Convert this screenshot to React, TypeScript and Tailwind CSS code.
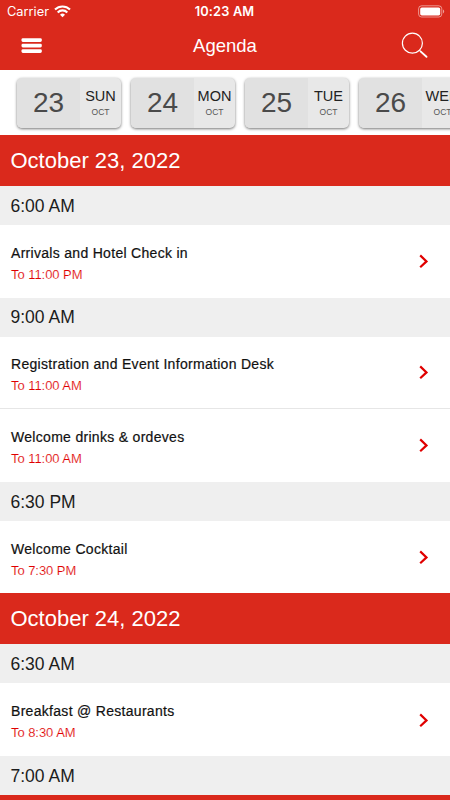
import React from 'react';

const days = [
  { num: '23', day: 'SUN' },
  { num: '24', day: 'MON' },
  { num: '25', day: 'TUE' },
  { num: '26', day: 'WED' },
];

function StatusBar() {
  return (
    <div className="flex h-[22px] items-center justify-between pl-[7px] pr-[5px] font-['Inter',sans-serif] text-[13px]">
      <div className="flex w-[120px] items-center gap-[5px]">
        <span className="w-[42px] whitespace-nowrap pt-px text-[12.8px]">Carrier</span>
        <svg width="17" height="13" viewBox="0 0 17 13" fill="none" stroke="white" strokeWidth="2.1">
          <path d="M1 4.6A10.7 10.7 0 0 1 16 4.6" />
          <path d="M3.7 7.4A6.8 6.8 0 0 1 13.3 7.4" />
          <path d="M8.5 12.3L6 9.8a3.6 3.6 0 0 1 5 0Z" fill="white" stroke="none" />
        </svg>
      </div>
      <span className="-ml-[3px] pt-px text-[12.8px] font-semibold tracking-[0.15px]">10:23 AM</span>
      <div className="flex w-[120px] justify-end">
        <svg width="27" height="13" viewBox="0 0 27 13">
          <rect x="0.6" y="0.8" width="23.2" height="11.2" rx="3" fill="none" stroke="white" strokeOpacity="0.5" />
          <rect x="2.2" y="2.4" width="20" height="8" rx="1.6" fill="white" />
          <path d="M25 4.6c1.6.6 1.6 3.2 0 3.8Z" fill="white" fillOpacity="0.55" />
        </svg>
      </div>
    </div>
  );
}

function NavBar() {
  return (
    <div className="flex h-[48px] items-center justify-between pl-[21px] pr-[21px]">
      <svg width="28" height="28" viewBox="0 0 28 28" fill="white">
        <rect x="0.5" y="6.2" width="20.3" height="3.7" rx="1.4" />
        <rect x="0.5" y="11.7" width="20.3" height="3.7" rx="1.4" />
        <rect x="0.5" y="17.2" width="20.3" height="3.7" rx="1.4" />
      </svg>
      <h1 className="text-[18.5px] leading-6">Agenda</h1>
      <svg width="28" height="28" viewBox="0 0 28 28" fill="none" stroke="white">
        <circle cx="11.4" cy="11.2" r="10" strokeWidth="1.2" />
        <path d="M18.5 18.3l1.6 1.6" strokeWidth="1.2" />
        <path d="M19.8 19.6l5.7 5.2" strokeWidth="1.9" strokeLinecap="round" />
      </svg>
    </div>
  );
}

function DayCard({ num, day }: { num: string; day: string }) {
  return (
    <div className="flex h-[50px] w-[104px] shrink-0 overflow-hidden rounded-[5px] bg-[#e8e8e8] shadow-[0_1px_3px_rgba(0,0,0,0.55)]">
      <div className="flex w-[63px] items-center justify-center bg-[#e1e1e1] pt-px text-[28px] text-[#4a4a4a]">{num}</div>
      <div className="flex w-[41px] flex-col items-center pt-[9px] text-[#222]">
        <span className="text-[14.5px] leading-[18px]">{day}</span>
        <span className="pt-px text-[8.5px] leading-[12px] text-[#555]">OCT</span>
      </div>
    </div>
  );
}

function DateHeader({ children }: { children: React.ReactNode }) {
  return <h2 className="flex h-[51px] items-center bg-[#da291c] pl-[10.5px] text-[22px] text-white">{children}</h2>;
}

function TimeHeader({ children }: { children: React.ReactNode }) {
  return <h3 className="flex h-[39px] items-center bg-[#efefef] pl-[10.5px] pt-px text-[17.5px] text-[#1c1c1c]">{children}</h3>;
}

function Session({ title, end, divider }: { title: string; end: string; divider?: boolean }) {
  return (
    <div className={`flex h-[72.6px] items-center justify-between pl-[11px] pr-[20px] ${divider ? 'border-b border-[#e6e6e6]' : ''}`}>
      <div className="flex flex-col gap-[2px] pt-[5px]">
        <span className="text-[14px] leading-5 tracking-[0.3px] text-[#111] [-webkit-text-stroke:0.2px_#111]">{title}</span>
        <span className="text-[13px] leading-5 tracking-[-0.05px] text-[#e00000] [-webkit-text-stroke:0.15px_white]">{end}</span>
      </div>
      <svg width="12" height="16" viewBox="0 0 12 16" fill="none" stroke="#e00000" strokeWidth="2.2">
        <path d="M2.2 2.4L8.5 8.4l-6.3 5.8" />
      </svg>
    </div>
  );
}

export default function App() {
  return (
    <div className="flex h-[800px] w-[450px] flex-col overflow-hidden bg-white font-['Liberation_Sans',Arial,sans-serif]">
      <header className="h-[69.5px] shrink-0 bg-[#da291c] text-white">
        <StatusBar />
        <NavBar />
      </header>
      <nav className="flex h-[65.5px] shrink-0 gap-[10px] overflow-hidden pl-[17px] pt-[8px]">
        {days.map((d) => (
          <DayCard key={d.num} num={d.num} day={d.day} />
        ))}
      </nav>
      <main className="shrink-0">
        <DateHeader>October 23, 2022</DateHeader>
        <TimeHeader>6:00 AM</TimeHeader>
        <Session title="Arrivals and Hotel Check in" end="To 11:00 PM" />
        <TimeHeader>9:00 AM</TimeHeader>
        <Session title="Registration and Event Information Desk" end="To 11:00 AM" divider />
        <Session title="Welcome drinks & ordeves" end="To 11:00 AM" />
        <TimeHeader>6:30 PM</TimeHeader>
        <Session title="Welcome Cocktail" end="To 7:30 PM" />
        <DateHeader>October 24, 2022</DateHeader>
        <TimeHeader>6:30 AM</TimeHeader>
        <Session title="Breakfast @ Restaurants" end="To 8:30 AM" />
        <TimeHeader>7:00 AM</TimeHeader>
        <div className="h-[51px] bg-[#da291c]" />
      </main>
    </div>
  );
}
